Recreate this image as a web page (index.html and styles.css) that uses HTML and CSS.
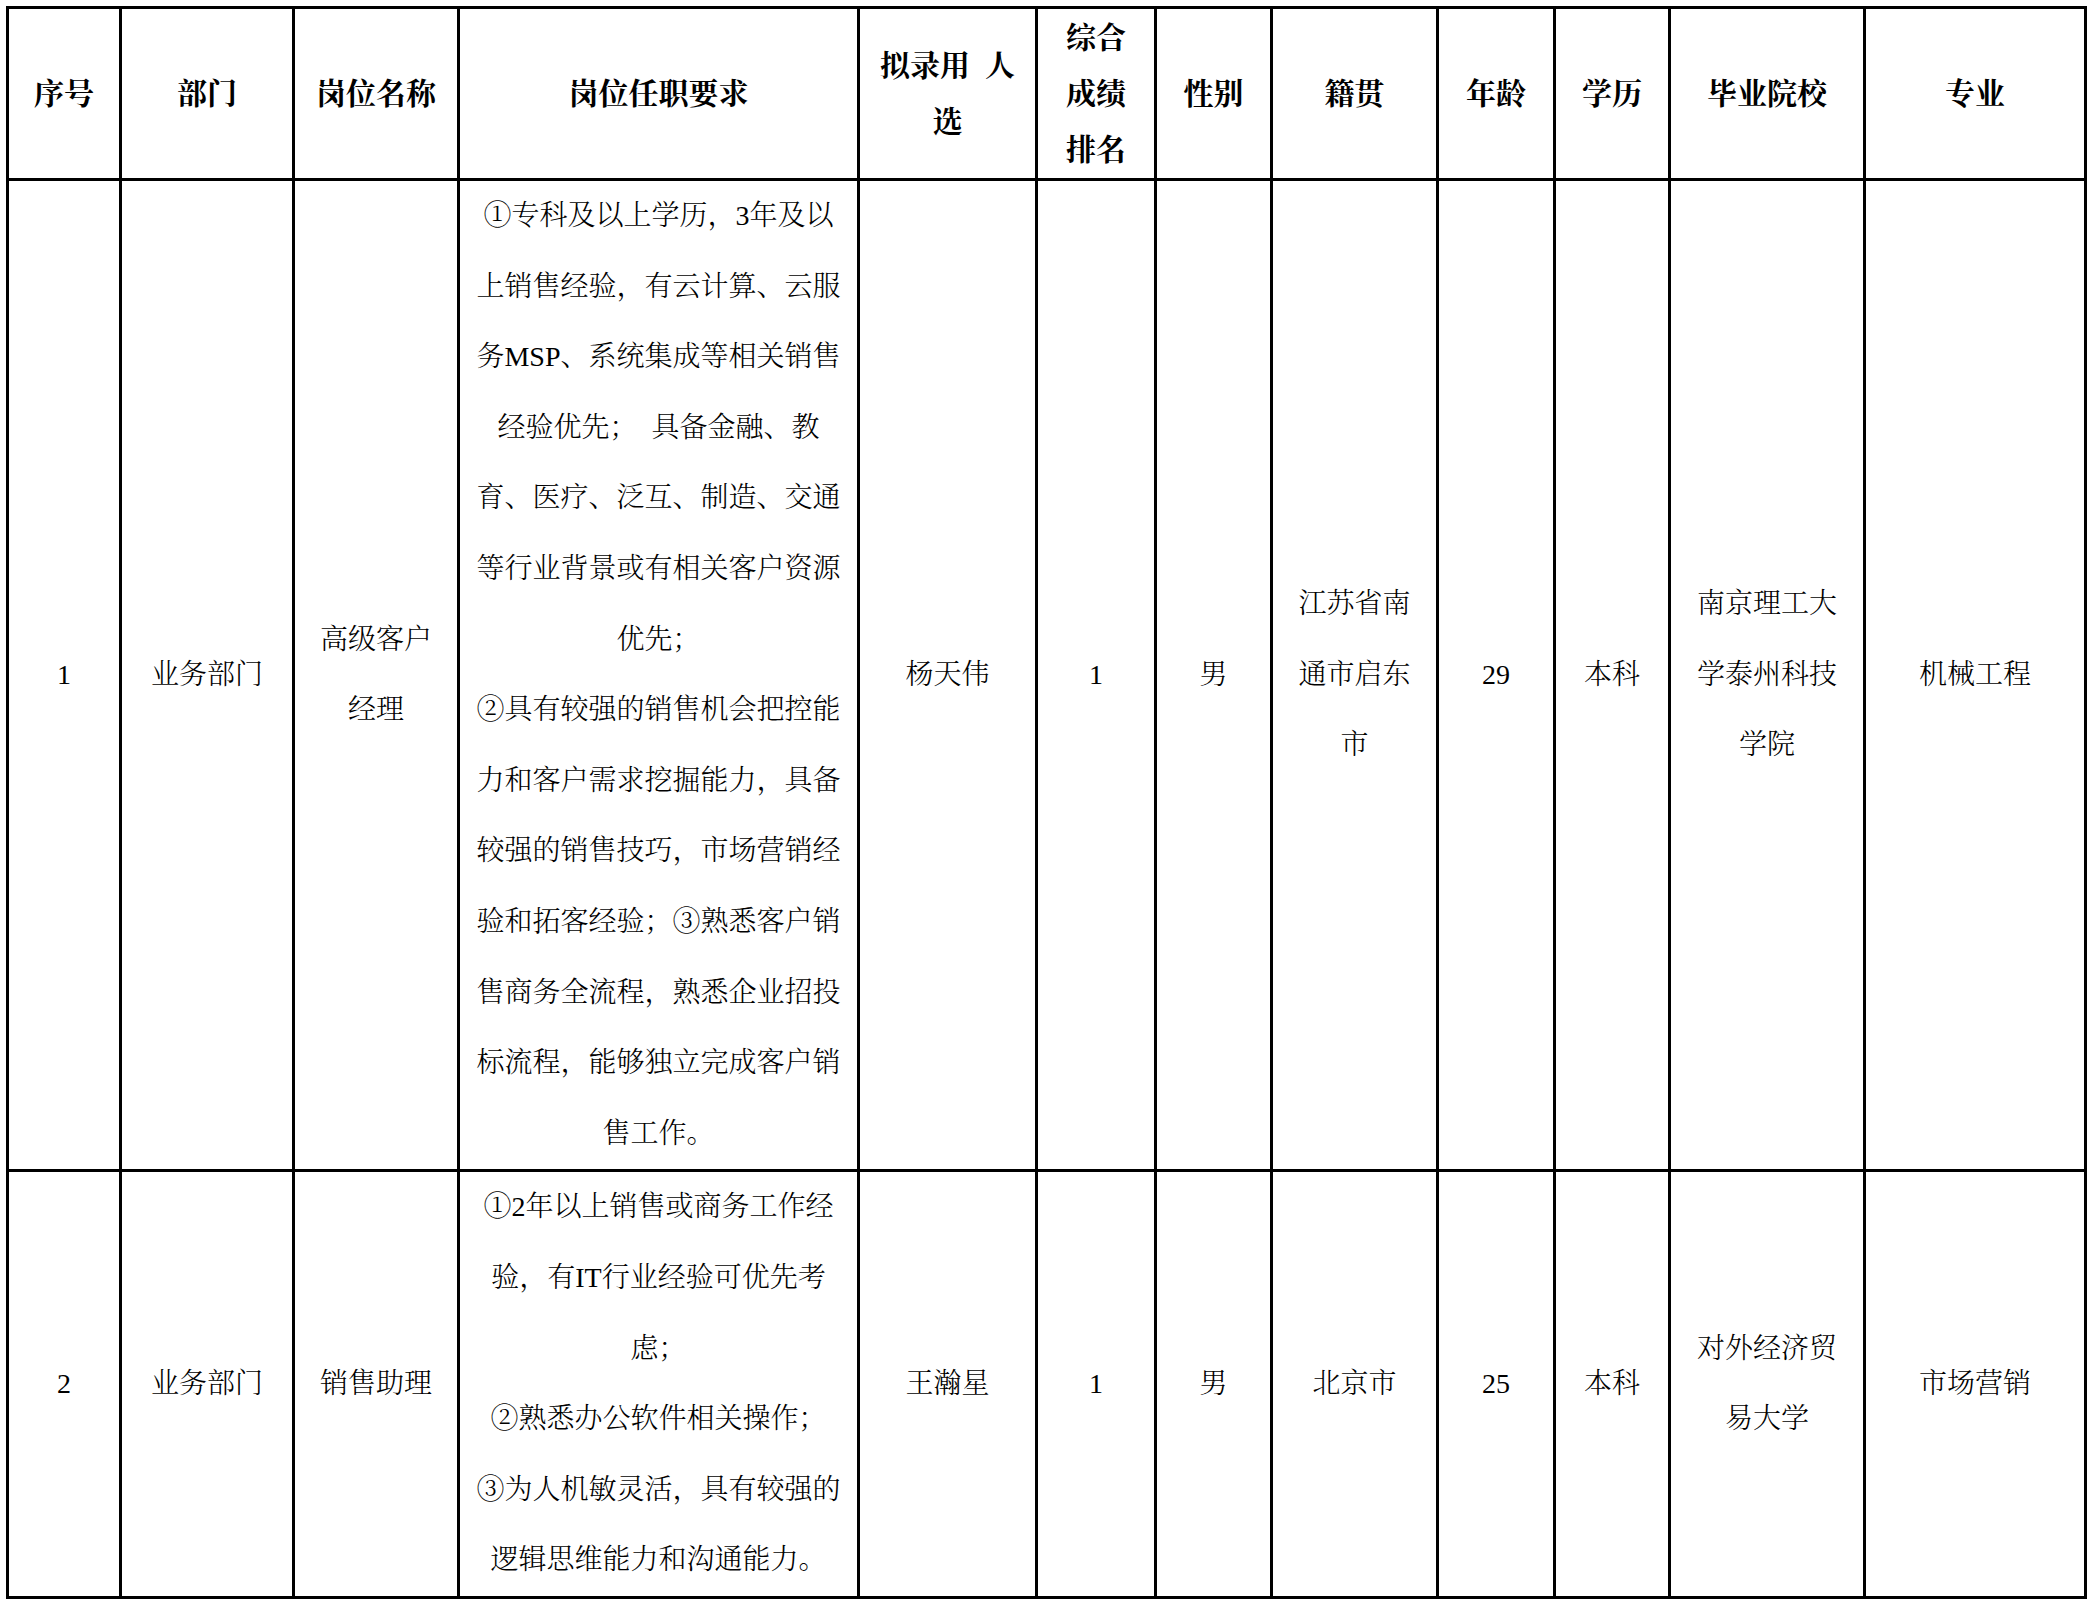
FILE: index.html
```html
<!DOCTYPE html>
<html lang="zh-CN">
<head>
<meta charset="utf-8">
<title>拟录用人选</title>
<link rel="stylesheet" href="styles.css">
</head>
<body>
<table class="grid">
  <colgroup>
    <col class="c1"><col class="c2"><col class="c3"><col class="c4"><col class="c5"><col class="c6">
    <col class="c7"><col class="c8"><col class="c9"><col class="c10"><col class="c11"><col class="c12">
  </colgroup>
  <thead>
    <tr class="head">
      <th>序号</th>
      <th>部门</th>
      <th>岗位名称</th>
      <th>岗位任职要求</th>
      <th>拟录用&ensp;人<br>选</th>
      <th>综合<br>成绩<br>排名</th>
      <th>性别</th>
      <th>籍贯</th>
      <th>年龄</th>
      <th>学历</th>
      <th>毕业院校</th>
      <th>专业</th>
    </tr>
  </thead>
  <tbody>
    <tr class="row1">
      <td>1</td>
      <td>业务部门</td>
      <td>高级客户<br>经理</td>
      <td class="req">①专科及以上学历，3年及以<br>上销售经验，有云计算、云服<br>务MSP、系统集成等相关销售<br>经验优先；&nbsp;&nbsp;具备金融、教<br>育、医疗、泛互、制造、交通<br>等行业背景或有相关客户资源<br>优先；<br>②具有较强的销售机会把控能<br>力和客户需求挖掘能力，具备<br>较强的销售技巧，市场营销经<br>验和拓客经验；③熟悉客户销<br>售商务全流程，熟悉企业招投<br>标流程，能够独立完成客户销<br>售工作。</td>
      <td>杨天伟</td>
      <td>1</td>
      <td>男</td>
      <td>江苏省南<br>通市启东<br>市</td>
      <td>29</td>
      <td>本科</td>
      <td>南京理工大<br>学泰州科技<br>学院</td>
      <td>机械工程</td>
    </tr>
    <tr class="row2">
      <td>2</td>
      <td>业务部门</td>
      <td>销售助理</td>
      <td class="req">①2年以上销售或商务工作经<br>验，有IT行业经验可优先考<br>虑；<br>②熟悉办公软件相关操作；<br>③为人机敏灵活，具有较强的<br>逻辑思维能力和沟通能力。</td>
      <td>王瀚星</td>
      <td>1</td>
      <td>男</td>
      <td>北京市</td>
      <td>25</td>
      <td>本科</td>
      <td>对外经济贸<br>易大学</td>
      <td>市场营销</td>
    </tr>
  </tbody>
</table>
</body>
</html>
```

FILE: styles.css
```css
html, body {
  margin: 0;
  padding: 0;
  background: #ffffff;
}

body {
  padding: 6px 0 0 6px;
  font-family: "Liberation Serif", "Noto Serif CJK SC", "Noto Sans CJK SC", serif;
  color: #000000;
}

.grid {
  border-collapse: collapse;
  table-layout: fixed;
  width: 2081px;
}

.grid th,
.grid td {
  border: 3px solid #000000;
  padding: 0 4px;
  text-align: center;
  vertical-align: middle;
  white-space: nowrap;
}

.grid th {
  font-size: 30px;
  font-weight: 700;
  line-height: 56px;
}

.grid td {
  font-size: 28px;
  font-weight: 300;
  line-height: 70.6px;
}

.head { height: 172px; }
.row1 { height: 990px; }
.row2 { height: 426px; }

.c1 { width: 113px; }
.c2 { width: 173px; }
.c3 { width: 165px; }
.c4 { width: 400px; }
.c5 { width: 178px; }
.c6 { width: 119px; }
.c7 { width: 116px; }
.c8 { width: 166px; }
.c9 { width: 117px; }
.c10 { width: 115px; }
.c11 { width: 195px; }
.c12 { width: 221px; }
```
